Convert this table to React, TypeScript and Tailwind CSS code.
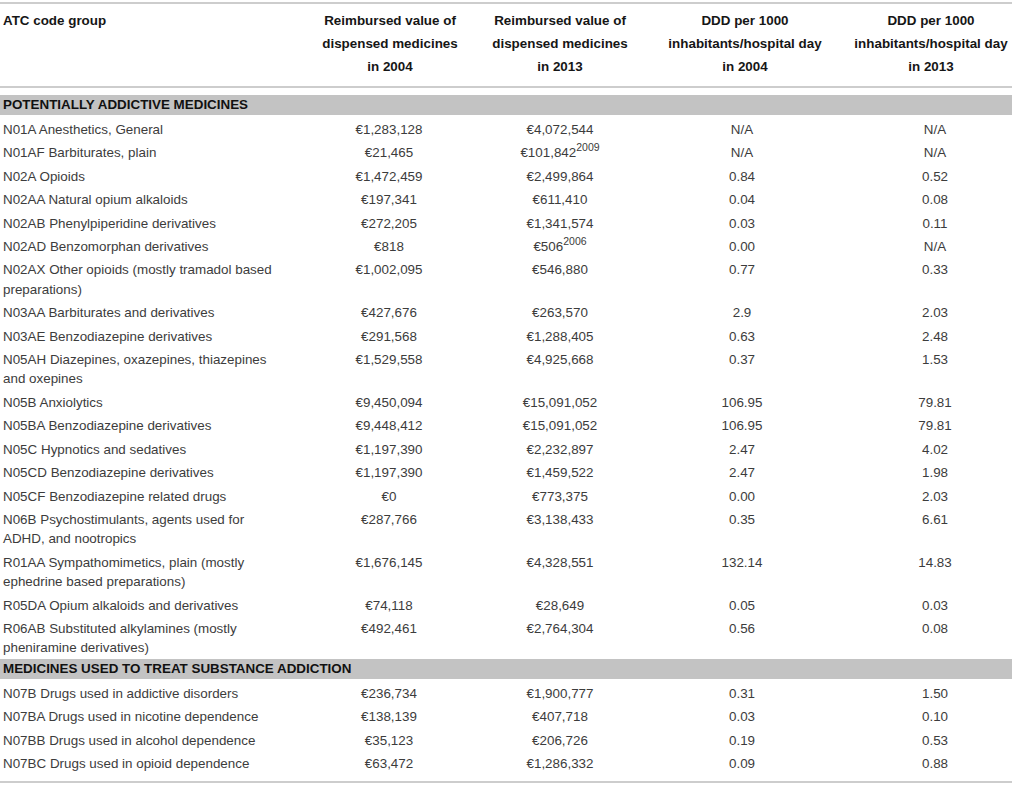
import React from 'react';

type Row = {
  atc: string[];
  v04: string;
  v13: string;
  sup?: string;
  d04: string;
  d13: string;
};

const addictive: Row[] = [
  { atc: ['N01A Anesthetics, General'], v04: '€1,283,128', v13: '€4,072,544', d04: 'N/A', d13: 'N/A' },
  { atc: ['N01AF Barbiturates, plain'], v04: '€21,465', v13: '€101,842', sup: '2009', d04: 'N/A', d13: 'N/A' },
  { atc: ['N02A Opioids'], v04: '€1,472,459', v13: '€2,499,864', d04: '0.84', d13: '0.52' },
  { atc: ['N02AA Natural opium alkaloids'], v04: '€197,341', v13: '€611,410', d04: '0.04', d13: '0.08' },
  { atc: ['N02AB Phenylpiperidine derivatives'], v04: '€272,205', v13: '€1,341,574', d04: '0.03', d13: '0.11' },
  { atc: ['N02AD Benzomorphan derivatives'], v04: '€818', v13: '€506', sup: '2006', d04: '0.00', d13: 'N/A' },
  { atc: ['N02AX Other opioids (mostly tramadol based', 'preparations)'], v04: '€1,002,095', v13: '€546,880', d04: '0.77', d13: '0.33' },
  { atc: ['N03AA Barbiturates and derivatives'], v04: '€427,676', v13: '€263,570', d04: '2.9', d13: '2.03' },
  { atc: ['N03AE Benzodiazepine derivatives'], v04: '€291,568', v13: '€1,288,405', d04: '0.63', d13: '2.48' },
  { atc: ['N05AH Diazepines, oxazepines, thiazepines', 'and oxepines'], v04: '€1,529,558', v13: '€4,925,668', d04: '0.37', d13: '1.53' },
  { atc: ['N05B Anxiolytics'], v04: '€9,450,094', v13: '€15,091,052', d04: '106.95', d13: '79.81' },
  { atc: ['N05BA Benzodiazepine derivatives'], v04: '€9,448,412', v13: '€15,091,052', d04: '106.95', d13: '79.81' },
  { atc: ['N05C Hypnotics and sedatives'], v04: '€1,197,390', v13: '€2,232,897', d04: '2.47', d13: '4.02' },
  { atc: ['N05CD Benzodiazepine derivatives'], v04: '€1,197,390', v13: '€1,459,522', d04: '2.47', d13: '1.98' },
  { atc: ['N05CF Benzodiazepine related drugs'], v04: '€0', v13: '€773,375', d04: '0.00', d13: '2.03' },
  { atc: ['N06B Psychostimulants, agents used for', 'ADHD, and nootropics'], v04: '€287,766', v13: '€3,138,433', d04: '0.35', d13: '6.61' },
  { atc: ['R01AA Sympathomimetics, plain (mostly', 'ephedrine based preparations)'], v04: '€1,676,145', v13: '€4,328,551', d04: '132.14', d13: '14.83' },
  { atc: ['R05DA Opium alkaloids and derivatives'], v04: '€74,118', v13: '€28,649', d04: '0.05', d13: '0.03' },
  { atc: ['R06AB Substituted alkylamines (mostly', 'pheniramine derivatives)'], v04: '€492,461', v13: '€2,764,304', d04: '0.56', d13: '0.08' },
];

const treatment: Row[] = [
  { atc: ['N07B Drugs used in addictive disorders'], v04: '€236,734', v13: '€1,900,777', d04: '0.31', d13: '1.50' },
  { atc: ['N07BA Drugs used in nicotine dependence'], v04: '€138,139', v13: '€407,718', d04: '0.03', d13: '0.10' },
  { atc: ['N07BB Drugs used in alcohol dependence'], v04: '€35,123', v13: '€206,726', d04: '0.19', d13: '0.53' },
  { atc: ['N07BC Drugs used in opioid dependence'], v04: '€63,472', v13: '€1,286,332', d04: '0.09', d13: '0.88' },
];

const cols = 'grid grid-cols-[300px_180px_160px_210px_162px]';

function Rule() {
  return <div className="h-[2px] bg-[#cdcdcd]" />;
}

function SectionBar({ title, className }: { title: string; className: string }) {
  return (
    <div className={`h-[20px] bg-[#c3c3c3] flex items-center pl-[3px] font-bold text-[#111] uppercase ${className}`}>
      {title}
    </div>
  );
}

function DataRow({ row }: { row: Row }) {
  return (
    <div className={`${cols} pt-[3px] pb-[1px] leading-[19.4px] text-[#3c3c3c]`}>
      <div className="pl-[3px]">
        {row.atc.map((line, i) => (
          <div key={i}>{line}</div>
        ))}
      </div>
      <div className="text-center pr-[2px]">{row.v04}</div>
      <div className="text-center">
        {row.v13}
        {row.sup && <sup className="text-[10.5px] top-[-0.6em]">{row.sup}</sup>}
      </div>
      <div className="text-center pr-[6px]">{row.d04}</div>
      <div className="text-center pl-[8px]">{row.d13}</div>
    </div>
  );
}

export default function App() {
  return (
    <div className="w-[1016px] min-h-[785px] bg-white pt-[2px] text-[13.4px] font-['Liberation_Sans',Arial,sans-serif]">
      <div className="w-[1012px]">
        <Rule />
        <div className={`${cols} pt-[5px] pb-[8px] leading-[23px] font-bold text-[#161616]`}>
          <div className="pl-[3px]">ATC code group</div>
          <div className="text-center">
            Reimbursed value of
            <br />
            dispensed medicines
            <br />
            in 2004
          </div>
          <div className="text-center">
            Reimbursed value of
            <br />
            dispensed medicines
            <br />
            in 2013
          </div>
          <div className="text-center">
            DDD per 1000
            <br />
            inhabitants/hospital day
            <br />
            in 2004
          </div>
          <div className="text-center">
            DDD per 1000
            <br />
            inhabitants/hospital day
            <br />
            in 2013
          </div>
        </div>
        <Rule />

        <SectionBar title="Potentially addictive medicines" className="mt-[7px] mb-[2px]" />
        {addictive.map((row, i) => (
          <DataRow key={i} row={row} />
        ))}

        <SectionBar title="Medicines used to treat substance addiction" className="mb-[2px]" />
        {treatment.map((row, i) => (
          <DataRow key={i} row={row} />
        ))}

        <div className="mt-[7px]">
          <Rule />
        </div>
      </div>
    </div>
  );
}
